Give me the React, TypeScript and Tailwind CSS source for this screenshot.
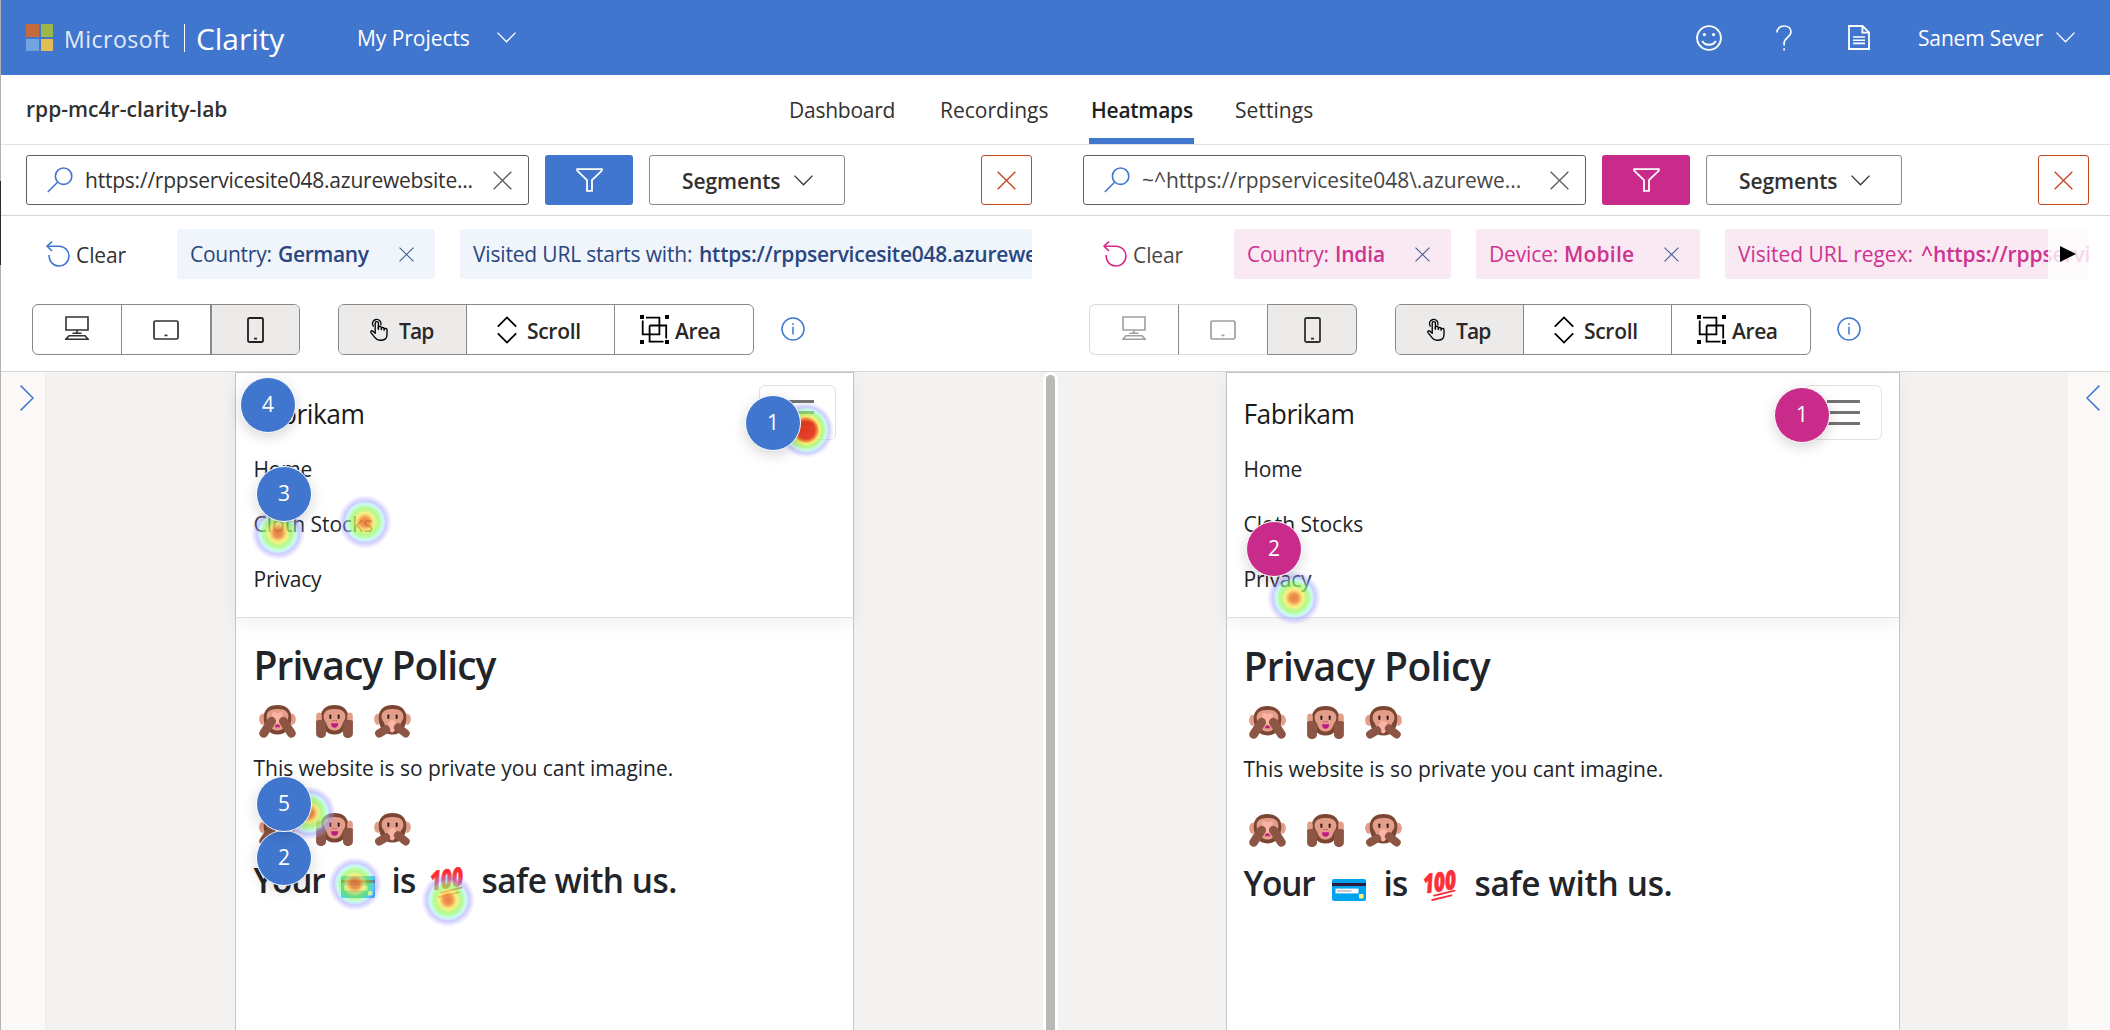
import type { ReactNode } from 'react';

/* ---------- icons ---------- */

const Chevron = ({ className }: { className: string }) => (
  <svg className={className} viewBox="0 0 19 11" fill="none" stroke="currentColor" strokeWidth="1.3">
    <path d="M0.5 0.6 9.5 9.8 18.5 0.6" />
  </svg>
);

const Cross = ({ className }: { className: string }) => (
  <svg className={className} viewBox="0 0 20 20" fill="none" stroke="currentColor" strokeWidth="1.4">
    <path d="M0.7 0.7 19.3 19.3M19.3 0.7 0.7 19.3" />
  </svg>
);

const Search = () => (
  <svg className="h-[26px] w-[26px] shrink-0 text-[#4076ce]" viewBox="0 0 26 26" fill="none" stroke="currentColor" strokeWidth="1.6">
    <circle cx="16.6" cy="9.2" r="8.2" />
    <path d="M10.8 15 0.8 25" />
  </svg>
);

const Funnel = () => (
  <svg className="h-[24px] w-[27px]" viewBox="0 0 27 24" fill="none" stroke="white" strokeWidth="1.8">
    <path d="M1.2 1.2H25.8V2.6L16 12.2V22.8H11V12.2L1.2 2.6Z" />
  </svg>
);

const Undo = ({ className }: { className: string }) => (
  <svg className={className} viewBox="0 0 24 26" fill="none" stroke="currentColor" strokeWidth="1.6">
    <path d="M6 0.6 1 5.2 6 10" />
    <path d="M1 5.2H13.2A9.9 9.9 0 1 1 3.2 14" />
  </svg>
);

const Desktop = () => (
  <svg className="h-[24px] w-[24px]" viewBox="0 0 24 24" fill="none" stroke="currentColor" strokeWidth="1.6">
    <path d="M1 1H23V14H1ZM12 14V17M7.5 17.2H16.5M4 19.8H20L23 23.2H1Z" />
  </svg>
);

const Tablet = () => (
  <svg className="h-[20px] w-[26px]" viewBox="0 0 26 20" fill="none" stroke="currentColor" strokeWidth="1.7">
    <rect x="1" y="1" width="24" height="18" rx="1.6" />
    <path d="M11.5 15.4H14.5" />
  </svg>
);

const Phone = () => (
  <svg className="h-[26px] w-[17px]" viewBox="0 0 17 26" fill="none" stroke="currentColor" strokeWidth="1.8">
    <rect x="1" y="1" width="15" height="24" rx="1.6" />
    <path d="M7 21.6H10" />
  </svg>
);

const TapIcon = () => (
  <svg className="h-[23px] w-[18px]" viewBox="0 0 18 23" fill="none" stroke="black" strokeWidth="1.35" strokeLinejoin="round" strokeLinecap="round">
    <path d="M3.2 8.2A4.3 4.3 0 1 1 10.9 6.8" />
    <path d="M5.2 14.5V5.2a1.6 1.6 0 0 1 3.2 0V11" />
    <path d="M8.4 11V9.6a1.4 1.4 0 0 1 2.9 0.3V11.6M11.3 10.8a1.4 1.4 0 0 1 2.8 0.2V12.2M14.1 11.8a1.4 1.4 0 0 1 2.9 0.2V16.6C17 20 15 22.2 11.4 22.2H9.8C7.6 22.2 6.4 21.4 5.2 19.8L1 14.6C0.2 13.2 1.8 12.2 3 13.2L5.2 15.2" />
  </svg>
);

const ScrollIcon = () => (
  <svg className="h-[28px] w-[20px]" viewBox="0 0 20 28" fill="none" stroke="black" strokeWidth="1.8">
    <path d="M0.8 10.6 10 1.4 19.2 10.6M0.8 17.4 10 26.6 19.2 17.4" />
  </svg>
);

const AreaIcon = () => (
  <svg className="h-[29px] w-[29px]" viewBox="0 0 29 29" fill="none" stroke="black" strokeWidth="1.8">
    <path d="M6 2.6H19.4V19.3H2.7V5.5" />
    <path d="M9.6 10.5H26.2V23.5M9.6 10.5V26.6H23.5" />
    <g fill="black" stroke="none">
      <path d="M0 0H4V4H0ZM25 0H29V4H25ZM0 25H4V29H0ZM25 25H29V29H25Z" />
    </g>
  </svg>
);

const Info = () => (
  <svg className="mb-[2px] h-[24px] w-[24px] text-[#4076ce]" viewBox="0 0 24 24" fill="none" stroke="currentColor" strokeWidth="1.5">
    <circle cx="12" cy="12" r="11" />
    <path d="M12 9.8V17.5M12 6.2V8" />
  </svg>
);

const Smile = () => (
  <svg className="h-[26px] w-[26px]" viewBox="0 0 26 26" fill="none" stroke="white" strokeWidth="1.9">
    <circle cx="13" cy="13" r="11.9" />
    <path d="M6.2 16C9 21 17 21 19.8 16" />
    <circle cx="8.4" cy="9.6" r="1.6" fill="white" stroke="none" />
    <circle cx="17.6" cy="9.6" r="1.6" fill="white" stroke="none" />
  </svg>
);

const Question = () => (
  <svg className="h-[26px] w-[16px]" viewBox="0 0 16 26" fill="none" stroke="white" strokeWidth="1.7">
    <path d="M1 7.6C1 3.6 3.8 1 8 1S15 3.4 15 7C15 12.4 8.1 12.4 8.1 18.2V20.4" />
    <path d="M8.1 23.2V25.6" />
  </svg>
);

const Doc = () => (
  <svg className="h-[25px] w-[22px]" viewBox="0 0 22 25" fill="none" stroke="white" strokeWidth="1.8">
    <path d="M1 1H14.6L21 7.4V24H1ZM14.4 1V7.6H21" />
    <path d="M5 12H17M5 15.2H17M5 18.4H17" strokeWidth="1.6" />
  </svg>
);

/* ---------- page illustrations ---------- */

const DARK = '#7b4633';
const SKIN = '#e39d89';
const ARM = '#8d5644';
const HAND = '#fbb3a6';

const Hood = () => (
  <>
    <path d="M18.5 0C27 0 32 4.8 32.4 11.5C32.8 22 27.5 29.5 18.5 29.5S4.2 22 4.6 11.5C5 4.8 10 0 18.5 0Z" fill={DARK} />
    <path d="M18.5 4C26 3.8 29.4 7 29.4 11.5C29.4 15 27.8 16 26.6 18.5C25.4 23 23 25.6 18.5 25.6S11.6 23 10.4 18.5C9.2 16 7.6 15 7.6 11.5C7.6 7 11 3.8 18.5 4Z" fill={SKIN} />
  </>
);

const Ears = () => <path d="M4.8 8.6C-1.4 8.6-1.4 20 4.8 20ZM32.2 8.6C38.4 8.6 38.4 20 32.2 20Z" fill={SKIN} />;

const Eyes = () => (
  <>
    <rect x="13.4" y="9.4" width="1.9" height="4.6" rx="0.9" fill="#2b1c20" />
    <rect x="21.7" y="9.4" width="1.9" height="4.6" rx="0.9" fill="#2b1c20" />
  </>
);

const Monkey = ({ kind }: { kind: 'see' | 'hear' | 'speak' }) => (
  <svg className="h-[33px] w-[37px] shrink-0" viewBox="0 0 37 33">
    {kind !== 'hear' && <Ears />}
    <Hood />
    {kind === 'see' && (
      <>
        <path d="M16 22.2C16.6 18.4 20.4 18.4 21 22.2Z" fill="#c01888" />
        <path d="M13 9C14 6.4 16.6 7.4 18.5 8.4C20.4 7.4 23 6.4 24 9L22 17C20.6 19.6 16.4 19.6 15 17Z" fill={HAND} />
        <path d="M4.6 28.4 12.6 16.2M32.4 28.4 24.4 16.2" stroke={ARM} strokeWidth="8.8" strokeLinecap="round" />
      </>
    )}
    {kind === 'hear' && (
      <>
        <Eyes />
        <path d="M16.4 15.6H17.6M19.4 15.6H20.6" stroke="#c03060" strokeWidth="1.2" />
        <path d="M15 18.2H22.2C22.2 21.4 20.6 22.8 18.6 22.8S15 21.4 15 18.2Z" fill="#c01888" />
        <path d="M0.2 10.5C0.2 6.6 5.8 6.6 5.8 10.5V18H0.2ZM36.8 10.5C36.8 6.6 31.2 6.6 31.2 10.5V18H36.8Z" fill={SKIN} />
        <path d="M0.1 16C3 14.2 10 15 10 20V28.4C10 34.4 0.1 34.4 0.1 28.4ZM36.9 16C34 14.2 27 15 27 20V28.4C27 34.4 36.9 34.4 36.9 28.4Z" fill={ARM} />
      </>
    )}
    {kind === 'speak' && (
      <>
        <Eyes />
        <path d="M15.4 16.4C17 14.6 20 14.6 21.4 16.6L22.6 19C22 23 20.6 27.4 18 27.4S14 22 13.4 19.6Z" fill={HAND} />
        <path d="M5.2 28.4 12 24.4M31.6 28.4 24 22.4" stroke={ARM} strokeWidth="8.2" strokeLinecap="round" />
      </>
    )}
  </svg>
);

const Monkeys = ({ className }: { className: string }) => (
  <div className={`ml-[5px] flex h-[33px] ${className}`}>
    <Monkey kind="see" />
    <Monkey kind="hear" />
    <Monkey kind="speak" />
  </div>
);

const Card = () => (
  <svg className="h-[22px] w-[34px]" viewBox="0 0 34 22">
    <rect width="34" height="22" rx="2" fill="#00a3ee" />
    <path d="M0 4H34V7H0Z" fill="#321b41" />
    <path d="M3.5 9.6H26.5V14.4H3.5Z" fill="#fff" />
    <path d="M5 12H19.5" stroke="#c4bcc0" strokeWidth="1.6" />
    <rect x="27" y="15" width="4.6" height="4.6" rx="0.8" fill="#fff07a" />
  </svg>
);

const Hundred = () => (
  <svg className="h-[31px] w-[36px] overflow-visible" viewBox="0 0 36 31">
    <text
      transform="translate(1 23.6) rotate(-9) skewX(-4)"
      fontFamily="Open Sans, sans-serif"
      fontWeight="800"
      fontStyle="italic"
      fontSize="26"
      textLength="33"
      lengthAdjust="spacingAndGlyphs"
      fill="#fb2f36"
      stroke="#fb2f36"
      strokeWidth="0.8"
    >
      100
    </text>
    <path d="M11 25.6 31.6 20.6M9.2 30 28.4 25.4" stroke="#fb2f36" strokeWidth="1.9" strokeLinecap="round" />
  </svg>
);

/* ---------- toolbar ---------- */

const Clear = ({ iconClass, textClass }: { iconClass: string; textClass: string }) => (
  <div className={`flex w-[151px] shrink-0 items-center pl-5 text-[21px] tracking-[-0.1px] ${textClass}`}>
    <Undo className={`mr-1.5 h-[26px] w-[24px] ${iconClass}`} />
    <span className="pt-[3px]">Clear</span>
  </div>
);

const Chip = ({ className, label, labelClass, value, valueClass }: { className: string; label: string; labelClass: string; value: string; valueClass: string }) => (
  <div className={`flex h-[50px] shrink-0 items-center rounded-[3px] pl-[13px] text-[21px] whitespace-nowrap ${className}`}>
    <span className={`shrink-0 pt-0.5 ${labelClass}`}>{label}</span>
    <span className={`shrink-0 pt-0.5 font-semibold ${valueClass}`}>{value}</span>
    <Cross className="mr-[21px] ml-auto h-[15px] w-[15px] shrink-0 text-[#3d5c94]" />
  </div>
);

const ModeButtons = () => (
  <div className="ml-[38px] flex h-[51px] w-[416px] rounded-[6px] border border-[#8a8886] text-[21px] font-semibold tracking-[-0.3px] text-[#292827]">
    <div className="flex w-[128px] items-center rounded-l-[5px] border-r border-[#8a8886] bg-[#edebe9] pl-[31px]">
      <TapIcon />
      <span className="mt-[4px] ml-[11px] tracking-[-0.9px]">Tap</span>
    </div>
    <div className="flex w-[148px] items-center border-r border-[#8a8886] pl-[30px]">
      <ScrollIcon />
      <span className="mt-[4px] ml-2.5">Scroll</span>
    </div>
    <div className="flex items-center pl-[25px]">
      <AreaIcon />
      <span className="mt-[4px] ml-1.5 tracking-[-0.4px]">Area</span>
    </div>
  </div>
);

const SearchRow = ({ text, textClass, accent }: { text: string; textClass: string; accent: string }) => (
  <div className="flex h-[71px] items-center border-b border-[#d6d6d6]">
    <div className="flex h-[50px] w-[503px] items-center rounded-[3px] border border-[#605e5c] pl-5">
      <Search />
      <span className={`ml-3 w-[408px] shrink-0 pt-0.5 text-[21px] whitespace-nowrap ${textClass}`}>{text}</span>
      <Cross className="h-[19px] w-[19px] text-[#605e5c]" />
    </div>
    <div className={`ml-4 flex h-[50px] w-[88px] items-center justify-center rounded-[3px] ${accent}`}>
      <Funnel />
    </div>
    <div className="ml-4 flex h-[50px] w-[196px] items-center rounded-[3px] border border-[#8a8886] pl-8 text-[21px] font-semibold tracking-[-0.1px] text-[#323130]">
      <span className="w-[112px] pt-[3px]">Segments</span>
      <Chevron className="h-[11px] w-[19px]" />
    </div>
    <div className="ml-auto flex h-[50px] w-[51px] items-center justify-center rounded-[3px] border border-[#c4451f] text-[#c4451f]">
      <Cross className="h-[19px] w-[19px]" />
    </div>
  </div>
);

/* ---------- heatmap ---------- */

const Heat = ({ className }: { className: string }) => (
  <div
    className={`absolute size-[54px] rounded-full bg-[radial-gradient(circle_closest-side,rgba(232,118,52,.92)_0%,rgba(236,134,58,.88)_16%,rgba(250,214,86,.8)_29%,rgba(240,240,96,.76)_35%,rgba(156,245,88,.7)_46%,rgba(146,250,116,.64)_56%,rgba(156,246,238,.52)_67%,rgba(150,150,255,.48)_78%,rgba(175,165,255,.28)_89%,rgba(210,200,255,0)_100%)] ${className}`}
  />
);

const HotHeat = ({ className }: { className: string }) => (
  <div
    className={`absolute size-[56px] rounded-full bg-[radial-gradient(circle_closest-side,rgba(226,50,28,.96)_0%,rgba(230,58,30,.95)_32%,rgba(242,150,50,.9)_42%,rgba(246,236,90,.82)_48%,rgba(152,245,90,.72)_60%,rgba(156,246,224,.56)_73%,rgba(155,152,255,.48)_83%,rgba(185,175,255,.26)_92%,rgba(210,200,255,0)_100%)] ${className}`}
  />
);

const Marker = ({ className, children }: { className: string; children: ReactNode }) => (
  <div className={`absolute flex size-[56px] items-center justify-center rounded-full border border-white text-[21px] text-white shadow-[0_4px_14px_rgba(0,0,0,0.16)] ${className}`}>
    {children}
  </div>
);

const SitePage = ({
  className, title, para, second, line, your, card, is, hundred, safe, children,
}: {
  className: string; title: string; para: string; second: string; line: string; your: string; card: string; is: string; hundred: string; safe: string; children: ReactNode;
}) => (
  <div className={`relative h-[660px] shrink-0 border border-b-0 border-[#c8c6c4] bg-white text-[21px] text-[#212529] ${className}`}>
    <div className="h-[245px] border-b border-[#e0e0e0] pt-3 shadow-[0_6px_18px_rgba(0,0,0,0.06)]">
      <div className="mb-0.5 flex h-[55px] items-center justify-between">
        <span className="pt-[4px] text-[26.4px] tracking-[-0.5px] text-[#1a1a1a]">Fabrikam</span>
        <div className="mr-[17px] flex h-[55px] w-[77px] flex-col items-center justify-center gap-2 rounded-[6px] border border-[#e2e2e2]">
          <i className="h-[3px] w-[33px] bg-[#737373]" />
          <i className="h-[3px] w-[33px] bg-[#737373]" />
          <i className="h-[3px] w-[33px] bg-[#737373]" />
        </div>
      </div>
      <div className="h-[55px] leading-[55px] tracking-[-0.2px]">Home</div>
      <div className="h-[55px] leading-[55px] tracking-[0px]">Cloth Stocks</div>
      <div className="h-[55px] leading-[55px] tracking-[-0.2px]">Privacy</div>
    </div>
    <div className="whitespace-nowrap">
      <h1 className={`h-[48px] text-[39px] leading-[48px] font-semibold ${title}`}>Privacy Policy</h1>
      <Monkeys className={`mt-[16px] ${second}`} />
      <p className={`h-[33px] leading-[33px] ${para}`}>This website is so private you cant imagine.</p>
      <Monkeys className={`mt-[28px] ${second}`} />
      <h2 className={`flex h-10 items-center text-[33.4px] leading-10 font-semibold ${line}`}>
        <span className={`tracking-[-1.2px] ${your}`}>Your</span>
        <span className={`mt-[13px] ${card}`}><Card /></span>
        <span className={`tracking-[-0.8px] ${is}`}>is</span>
        <span className={`mt-[5px] ${hundred}`}><Hundred /></span>
        <span className={safe}>safe with us.</span>
      </h2>
    </div>
    {children}
  </div>
);

/* ---------- app ---------- */

export default function App() {
  return (
    <div className="relative flex h-[1030px] w-[2110px] flex-col overflow-hidden bg-white font-['Open_Sans',sans-serif] text-[#323130]">
      <header className="flex h-[75px] shrink-0 items-center bg-[#4076ce] pl-[26px] text-[21px] whitespace-nowrap text-white">
        <div className="grid grid-cols-2 gap-[2px]">
          <i className="h-[12.5px] w-[12.5px] bg-[#c56a3d]" />
          <i className="h-[12.5px] w-[12.5px] bg-[#9db749]" />
          <i className="h-[12.5px] w-[12.5px] bg-[#73a4e2]" />
          <i className="h-[12.5px] w-[12.5px] bg-[#e2bd54]" />
        </div>
        <span className="mt-[3px] ml-[11px] w-[120px] text-[23px] tracking-[0.5px] text-[#e3ebf8]">Microsoft</span>
        <i className="h-[28px] w-px bg-white" />
        <span className="mt-0.5 ml-[11px] w-[161px] text-[30px] tracking-[-0.05px]">Clarity</span>
        <span className="w-[140px] pt-0.5 tracking-[-0.05px]">My Projects</span>
        <Chevron className="h-[11px] w-[19px]" />
        <div className="mr-[35px] ml-auto flex items-center">
          <Smile />
          <span className="ml-[54px]"><Question /></span>
          <span className="ml-[56px]"><Doc /></span>
          <span className="ml-[48px] w-[138px] pt-0.5 tracking-[-0.15px]">Sanem Sever</span>
          <Chevron className="h-[11px] w-[19px]" />
        </div>
      </header>

      <nav className="flex h-[70px] shrink-0 items-center border-b border-[#e3e3e3] pl-[26px] text-[21px] whitespace-nowrap">
        <span className="w-[763px] font-semibold tracking-[0.02px]">rpp-mc4r-clarity-lab</span>
        <span className="w-[151px] pt-0.5 tracking-[-0.25px]">Dashboard</span>
        <span className="w-[149px] pt-0.5 tracking-[0px]">Recordings</span>
        <span className="flex h-full w-[105px] items-center border-b-[6px] border-[#4076ce] pt-[8px] pl-0.5 font-semibold tracking-[-0.25px] text-[#201f1e]">Heatmaps</span>
        <span className="ml-[41px] pt-0.5 tracking-[0.05px]">Settings</span>
      </nav>

      <div className="flex shrink-0">
        <section className="w-[1057px]">
          <div className="border-b border-[#d6d6d6]">
            <div className="[&>div]:pr-[25px] [&>div]:pl-[26px]">
              <SearchRow text="https://rppservicesite048.azurewebsite..." textClass="tracking-[-0.22px]" accent="bg-[#4076ce]" />
            </div>
            <div className="mt-[13px] mr-[25px] ml-[26px] flex h-[50px] overflow-hidden">
              <Clear iconClass="text-[#4076ce]" textClass="" />
              <Chip className="w-[258px] bg-[#eff5fa] text-[#29467e]" label="Country:" labelClass="w-[88px] tracking-[-0.25px]" value="Germany" valueClass="tracking-[-0.35px]" />
              <div className="w-[25px] shrink-0" />
              <Chip className="w-[760px] bg-[#eff5fa] text-[#29467e]" label="Visited URL starts with:" labelClass="w-[226px] tracking-[-0.18px]" value="https://rppservicesite048.azurewebsites.net" valueClass="tracking-[-0.24px]" />
            </div>
            <div className="mt-[25px] mb-4 ml-8 flex items-center">
              <div className="flex h-[51px] rounded-[6px] border border-[#8a8886]">
                <div className="flex w-[89px] items-center justify-center border-r border-[#8a8886] pb-1"><Desktop /></div>
                <div className="flex w-[89px] items-center justify-center border-r border-[#8a8886]"><Tablet /></div>
                <div className="flex w-[88px] items-center justify-center rounded-r-[5px] border-l border-[#8a8886] bg-[#edebe9] text-[#201f1e]"><Phone /></div>
              </div>
              <ModeButtons />
              <span className="ml-[27px]"><Info /></span>
            </div>
          </div>
        </section>

        <section className="w-[1053px]">
          <div className="border-b border-[#d6d6d6]">
            <div className="[&>div]:pr-[21px] [&>div]:pl-[26px]">
              <SearchRow text="~^https://rppservicesite048\.azurewe..." textClass="tracking-[-0.05px] text-[#484644]" accent="bg-[#c82b89]" />
            </div>
            <div className="relative mt-[13px] mr-[21px] ml-[26px] flex h-[50px] overflow-hidden">
              <Clear iconClass="text-[#d52a8c]" textClass="text-[#484644]" />
              <Chip className="w-[217px] bg-[#f9e9f3] text-[#cf3391]" label="Country:" labelClass="w-[88px] tracking-[-0.25px]" value="India" valueClass="tracking-[-0.2px]" />
              <div className="w-[25px] shrink-0" />
              <Chip className="w-[224px] bg-[#f9e9f3] text-[#cf3391]" label="Device:" labelClass="w-[75px] tracking-[-0.15px]" value="Mobile" valueClass="tracking-[0.2px]" />
              <div className="w-[25px] shrink-0" />
              <Chip className="w-[600px] bg-[#f9e9f3] text-[#cf3391]" label="Visited URL regex:" labelClass="w-[183px] tracking-[-0.02px]" value="^https://rppservicesite048" valueClass="tracking-[-0.1px]" />
              <div className="absolute top-0 right-0 flex h-[50px] w-[41px] items-center bg-white/80 pl-[12px]">
                <svg className="h-[16px] w-[16px]" viewBox="0 0 16 16"><path d="M0 0 16 8 0 16Z" /></svg>
              </div>
            </div>
            <div className="mt-[25px] mb-4 ml-8 flex items-center">
              <div className="flex h-[51px] text-[#a19f9d]">
                <div className="flex w-[89px] items-center justify-center rounded-l-[6px] border border-r-0 border-[#dddbd9] pb-1"><Desktop /></div>
                <div className="flex w-[89px] items-center justify-center border border-r-0 border-[#dddbd9] border-l-[#8a8886]"><Tablet /></div>
                <div className="flex w-[90px] items-center justify-center rounded-r-[6px] border border-[#8a8886] bg-[#edebe9] text-[#323130]"><Phone /></div>
              </div>
              <ModeButtons />
              <span className="ml-[26px]"><Info /></span>
            </div>
          </div>
        </section>
      </div>

      <main className="flex h-[658px] shrink-0 bg-[#f3f2f1]">
        <aside className="w-[46px] shrink-0 border-r border-[#efeeed] bg-[#faf9f8] pt-[13px] pl-5">
          <svg className="h-[26px] w-[14px] text-[#4076ce]" viewBox="0 0 14 26" fill="none" stroke="currentColor" strokeWidth="1.5"><path d="M0.6 0.6 13 13 0.6 25.4" /></svg>
        </aside>
        <div className="w-[997px] shrink-0 pl-[189px]">
          <SitePage
            className="w-[619px] [&>div>*]:pl-[17.5px]"
            title="mt-[23px] tracking-[-0.95px]"
            second="gap-x-[20.5px]"
            para="mt-[14px] tracking-[-0.03px]"
            line="mt-[14px]"
            your="w-[87px]"
            card="w-[51px]"
            is="w-[38px]"
            hundred="w-[52px]"
            safe="tracking-[-0.5px]"
          >
            <HotHeat className="top-[29px] left-[542px]" />
            <Heat className="top-[133px] left-[15px]" />
            <Heat className="top-[122px] left-[102px]" />
            <Heat className="top-[413px] left-[46px]" />
            <Heat className="top-[484px] left-[92px]" />
            <Heat className="top-[500px] left-[185px]" />
            <Marker className="top-[4px] left-[4px] bg-[#4076ce]">4</Marker>
            <Marker className="top-[21.5px] left-[509px] bg-[#4076ce]">1</Marker>
            <Marker className="top-[92.5px] left-[20px] bg-[#4076ce]">3</Marker>
            <Marker className="top-[456.5px] left-[20px] bg-[#4076ce]">2</Marker>
            <Marker className="top-[402.5px] left-[20px] bg-[#4076ce]">5</Marker>
          </SitePage>
        </div>
        <div className="w-[15px] shrink-0 rounded-t-[8px] bg-white pt-[3px] pl-[3px]">
          <div className="h-full w-[9px] rounded-t-[5px] bg-[#bab8b4]" />
        </div>
        <div className="flex-1 pl-[168px]">
          <SitePage
            className="w-[674px] [&>div>*]:pl-[16.5px]"
            title="mt-[24px] tracking-[-0.62px]"
            second="gap-x-[21px]"
            para="mt-[14px] tracking-[-0.03px]"
            line="mt-[16px]"
            your="w-[88px]"
            card="w-[52px]"
            is="w-[39px]"
            hundred="w-[52px]"
            safe="tracking-[-0.3px]"
          >
            <Heat className="top-[198px] left-[40px]" />
            <Marker className="top-[13.5px] left-[547px] bg-[#c82b89]">1</Marker>
            <Marker className="top-[147.5px] left-[19px] bg-[#c82b89]">2</Marker>
          </SitePage>
        </div>
        <aside className="w-[42px] shrink-0 bg-[#faf9f8] pt-[13px] pl-[18px]">
          <svg className="h-[26px] w-[14px] text-[#4076ce]" viewBox="0 0 14 26" fill="none" stroke="currentColor" strokeWidth="1.5"><path d="M13.4 0.6 1 13 13.4 25.4" /></svg>
        </aside>
      </main>

      <div className="absolute top-0 left-0 flex h-full w-px flex-col bg-[#b3b1b0] pt-[181px]">
        <i className="h-[84px] w-px bg-[#2b2b2b]" />
      </div>
    </div>
  );
}
